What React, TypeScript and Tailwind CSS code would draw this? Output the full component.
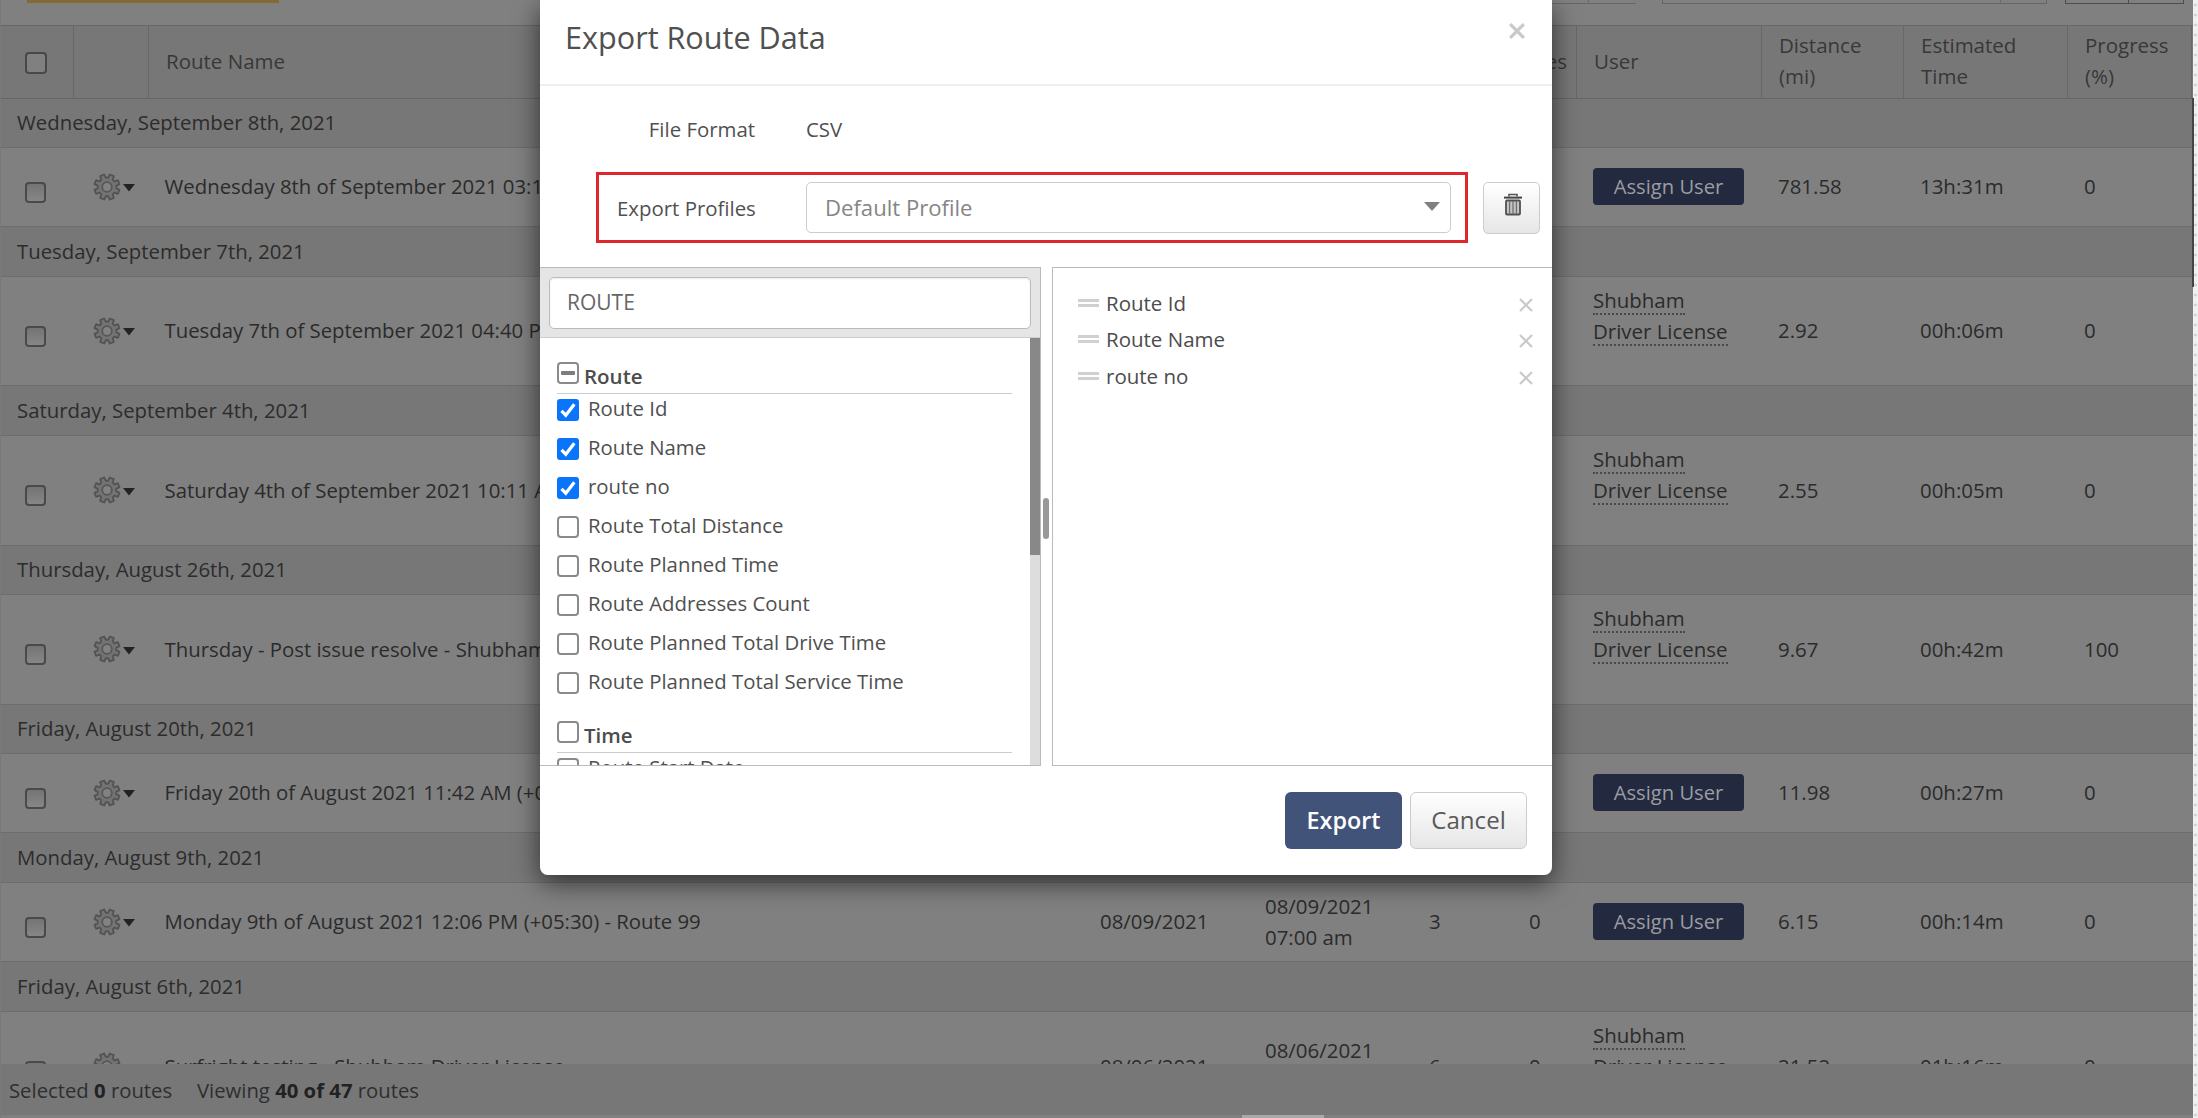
import type { ReactNode } from "react";

type RouteRow = {
  day: string;
  dayHeight: string;
  rowHeight: string;
  name: string;
  date?: string;
  time?: string;
  stops?: string;
  notes?: string;
  driver: boolean;
  distance: string;
  duration: string;
  progress: string;
};

const ROUTES: RouteRow[] = [
  { day: "Wednesday, September 8th, 2021", dayHeight: "h-[49px]", rowHeight: "h-[79px]", name: "Wednesday 8th of September 2021 03:15 PM (+05:30)", driver: false, distance: "781.58", duration: "13h:31m", progress: "0" },
  { day: "Tuesday, September 7th, 2021", dayHeight: "h-[50px]", rowHeight: "h-[109px]", name: "Tuesday 7th of September 2021 04:40 PM (+05:30)", driver: true, distance: "2.92", duration: "00h:06m", progress: "0" },
  { day: "Saturday, September 4th, 2021", dayHeight: "h-[50px]", rowHeight: "h-[110px]", name: "Saturday 4th of September 2021 10:11 AM (+05:30)", driver: true, distance: "2.55", duration: "00h:05m", progress: "0" },
  { day: "Thursday, August 26th, 2021", dayHeight: "h-[49px]", rowHeight: "h-[110px]", name: "Thursday - Post issue resolve - Shubham Driver", driver: true, distance: "9.67", duration: "00h:42m", progress: "100" },
  { day: "Friday, August 20th, 2021", dayHeight: "h-[49px]", rowHeight: "h-[79px]", name: "Friday 20th of August 2021 11:42 AM (+05:30)", driver: false, distance: "11.98", duration: "00h:27m", progress: "0" },
  { day: "Monday, August 9th, 2021", dayHeight: "h-[50px]", rowHeight: "h-[79px]", name: "Monday 9th of August 2021 12:06 PM (+05:30) - Route 99", date: "08/09/2021", time: "07:00 am", stops: "3", notes: "0", driver: false, distance: "6.15", duration: "00h:14m", progress: "0" },
  { day: "Friday, August 6th, 2021", dayHeight: "h-[50px]", rowHeight: "h-[110px]", name: "Surfright testing - Shubham Driver License", date: "08/06/2021", time: "07:00 am", stops: "6", notes: "0", driver: true, distance: "21.52", duration: "01h:16m", progress: "0" },
];

const FIELDS: [string, boolean][] = [
  ["Route Id", true],
  ["Route Name", true],
  ["route no", true],
  ["Route Total Distance", false],
  ["Route Planned Time", false],
  ["Route Addresses Count", false],
  ["Route Planned Total Drive Time", false],
  ["Route Planned Total Service Time", false],
];

const COLS =
  "grid grid-cols-[73px_75px_935px_165px_164px_100px_64px_185px_142px_164px_124px]";

const GEAR_POINTS = Array.from({ length: 8 }, (_, i) => {
  const c = (i * Math.PI) / 4 + Math.PI / 8;
  return [
    [c - 0.27, 9.3],
    [c - 0.17, 12.8],
    [c + 0.17, 12.8],
    [c + 0.27, 9.3],
  ]
    .map(([a, r]) => `${(14 + r * Math.cos(a)).toFixed(2)},${(14 + r * Math.sin(a)).toFixed(2)}`)
    .join(" ");
}).join(" ");

function Gear() {
  return (
    <svg viewBox="0 0 28 28" className="h-7 w-7 shrink-0">
      <polygon points={GEAR_POINTS} fill="#737373" stroke="#535353" strokeWidth="1.8" strokeLinejoin="round" />
      <circle cx="14" cy="14" r="4.8" fill="#828282" stroke="#575757" strokeWidth="1.8" />
    </svg>
  );
}

function Cross({ className, width }: { className: string; width: number }) {
  return (
    <svg viewBox="0 0 14 14" className={className} stroke="#c9c9c9" strokeWidth={width}>
      <path d="M1 1 L13 13 M13 1 L1 13" />
    </svg>
  );
}

function Check({ state }: { state?: "on" | "mixed" | "off" }) {
  if (state === "on") {
    return (
      <svg viewBox="0 0 22 22" className="h-[22px] w-[22px] shrink-0">
        <rect width="22" height="22" rx="3" fill="#0a75fb" />
        <path d="M4.5 11.8 L8.8 16.2 L17.3 5.2" fill="none" stroke="#fff" strokeWidth="3.2" />
      </svg>
    );
  }
  return (
    <span className="flex h-[22px] w-[22px] shrink-0 items-center justify-center rounded-[4px] border-2 border-[#8a8a8a] bg-white">
      {state === "mixed" && <span className="h-[4px] w-[14px] rounded-[1px] bg-[#7d7d7d]" />}
    </span>
  );
}

function HeadCell({ children, className = "" }: { children?: ReactNode; className?: string }) {
  return (
    <div className={`flex items-center border-r border-[#686868] pb-[2px] pl-[17px] ${className}`}>{children}</div>
  );
}

function GridRow({ route }: { route: RouteRow }) {
  return (
    <>
      <div className={`${route.dayHeight} flex items-center border-b border-[#6d6d6d] bg-[#777] pb-px pl-4 text-[20.35px] text-[#2c2c2c]`}>
        {route.day}
      </div>
      <div className={`${route.rowHeight} ${COLS} items-center border-b border-[#6d6d6d] bg-[#808080] pb-px text-[20.45px] text-[#2b2b2b]`}>
        <span className="mt-[11px] ml-6 h-[21px] w-[21px] rounded-[4px] border-2 border-[#4a4a4a] bg-linear-to-b from-[#747474] to-[#878787]" />
        <span className="flex items-center pl-[19px]">
          <Gear />
          <svg viewBox="0 0 12 8" className="mt-[3px] ml-[2px] h-2 w-3">
            <path d="M0 0 H12 L6 7.5 Z" fill="#222" />
          </svg>
        </span>
        <span className="pl-[15.5px] text-[20.35px]">{route.name}</span>
        <span className="pl-4">{route.date}</span>
        <span className="pl-4 leading-[31px]">
          {route.date}
          <br />
          {route.time}
        </span>
        <span className="pl-4">{route.stops}</span>
        <span className="pl-4">{route.notes}</span>
        <span className="pl-4">
          {route.driver ? (
            <span className="mb-[31px] flex flex-col items-start leading-[31px]">
              <span className="flex h-[31px] flex-col">
                <span className="h-[30px] border-b-2 border-dotted border-[#484848]">Shubham</span>
              </span>
              <span className="h-[30px] border-b-2 border-dotted border-[#484848]">Driver License</span>
            </span>
          ) : (
            <span className="flex h-[37px] w-[151px] items-center justify-center rounded-[4px] bg-[#232a3f] pb-px text-[20.2px] text-[#9b9da3]">
              Assign User
            </span>
          )}
        </span>
        <span className="pl-4">{route.distance}</span>
        <span className="pl-4">{route.duration}</span>
        <span className="pl-4">{route.progress}</span>
      </div>
    </>
  );
}

function RoutesPage() {
  return (
    <div className="flex h-[1118px] w-[2193px] flex-col overflow-hidden border-l border-[#747a80] bg-[#808080]">
      <div className="flex h-[25px] items-start">
        <div className="ml-[26px] h-[3px] w-[252px] bg-[#866a36]" />
        <div className="ml-[1258px] flex h-1 w-[99px] border-b border-[#666]">
          <div className="w-[52px] border-r border-[#6c6c6c]" />
        </div>
        <div className="ml-[26px] flex h-1 w-[385px] border-x border-b border-[#666]">
          <div className="w-[338px] border-r border-[#6c6c6c]" />
        </div>
        <div className="ml-[18px] flex h-1 w-[119px] border-x border-b border-[#4d4d4d]">
          <div className="w-[63px] border-r border-[#4d4d4d]" />
        </div>
      </div>
      <div className={`${COLS} h-[74px] shrink-0 border-y border-[#666] bg-[#777] text-[20.5px] leading-[31px] text-[#383838]`}>
        <HeadCell className="pl-[24px]">
          <span className="mt-1 h-[22px] w-[22px] rounded-[4px] border-2 border-[#484848] bg-[#808080]" />
        </HeadCell>
        <HeadCell />
        <HeadCell>Route Name</HeadCell>
        <HeadCell />
        <HeadCell />
        <HeadCell />
        <HeadCell className="justify-end pr-[9px]">Notes</HeadCell>
        <HeadCell>User</HeadCell>
        <HeadCell>
          Distance
          <br />
          (mi)
        </HeadCell>
        <HeadCell>
          Estimated
          <br />
          Time
        </HeadCell>
        <HeadCell>
          Progress
          <br />
          (%)
        </HeadCell>
      </div>
      <div className="h-[965px] shrink-0 overflow-hidden">
        {ROUTES.map((r) => (
          <GridRow key={r.day} route={r} />
        ))}
      </div>
      <div className="flex h-[51px] shrink-0 items-center bg-[#777] pt-[2px] pl-2 text-[20.3px] whitespace-pre text-[#2e2e2e]">
        <span className="w-[188px]">
          Selected <b className="text-[#222]">0</b> routes
        </span>
        <span>
          Viewing <b className="text-[#222]">40 of 47</b> routes
        </span>
      </div>
      <div className="ml-[1241px] h-[3px] w-[82px] bg-[#a9a9a9]" />
    </div>
  );
}

function FieldGroup({ label, state }: { label: string; state: "mixed" | "off" }) {
  return (
    <div className="flex h-8 gap-[5px] border-b border-[#ccc]">
      <Check state={state} />
      <span className="mt-[2px] text-[20.5px] leading-6 font-semibold text-[#4c4c4c]">{label}</span>
    </div>
  );
}

function Field({ label, on }: { label: string; on: boolean }) {
  return (
    <div className="flex h-[39px] items-start gap-[9px]">
      <Check state={on ? "on" : "off"} />
      <span className="-mt-[3px] text-[20.35px] leading-6 text-[#505050]">{label}</span>
    </div>
  );
}

function ExportDialog() {
  return (
    <div className="absolute top-0 left-[540px] flex h-[875px] w-[1012px] flex-col overflow-hidden rounded-b-[8px] bg-white">
      <div className="flex h-[86px] justify-between border-b-2 border-[#eee] pr-[27px] pl-[25px]">
        <h1 className="mt-4 text-[30.6px] leading-[42px] text-[#505050]">Export Route Data</h1>
        <Cross className="mt-[23px] h-4 w-4" width={2.8} />
      </div>
      <div className="flex h-[86px] items-center text-[20.4px] text-[#505050]">
        <span className="w-[215px] text-right">File Format</span>
        <span className="ml-[51px]">CSV</span>
      </div>
      <div className="flex h-[71px] items-center pl-14">
        <div className="flex h-[71px] w-[872px] items-center border-[3px] border-[#df262c] pl-[18px]">
          <span className="w-[138px] pt-px text-[20.4px] whitespace-nowrap text-[#505050]">Export Profiles</span>
          <div className="ml-[51px] flex h-[51px] w-[645px] items-center justify-between rounded-[5px] border-[1.5px] border-[#ccc] pr-[10px] pl-[18px]">
            <span className="pt-px text-[22.1px] text-[#858585]">Default Profile</span>
            <svg viewBox="0 0 16 9" className="mb-[3px] h-[9px] w-4">
              <path d="M0 0 H16 L8 9 Z" fill="#808080" />
            </svg>
          </div>
        </div>
        <div className="ml-[15px] flex h-[52px] w-[57px] justify-center rounded-[5px] border-[1.5px] border-[#ccc] bg-linear-to-b from-white to-[#e6e6e6] pt-[10px] pl-[2px]">
          <svg viewBox="0 0 18 23" className="h-[23px] w-[18px]">
            <path d="M5 3.5 V1.5 H13 V3.5" fill="none" stroke="#555" strokeWidth="1.6" />
            <path d="M0 4.6 H18" stroke="#444" strokeWidth="2" />
            <rect x="2" y="7.5" width="14" height="14" rx="1" fill="#c4c4c4" stroke="#505050" strokeWidth="1.8" />
            <path d="M5.6 8 V21 M9 8 V21 M12.4 8 V21" stroke="#707070" strokeWidth="1.3" />
          </svg>
        </div>
      </div>
      <div className="mt-6 flex h-[499px] shrink-0">
        <div className="flex w-[501px] flex-col border-y border-r border-[#bbb]">
          <div className="flex h-[70px] shrink-0 items-center border-b border-[#ccc] bg-[#e5e5e5] pl-[9px]">
            <div className="flex h-[52px] w-[482px] items-center rounded-[5px] border-[1.5px] border-[#bbb] bg-white pl-[17px] text-[21px] text-[#666] shadow-[inset_0_1px_2px_rgba(0,0,0,0.08)]">
              ROUTE
            </div>
          </div>
          <div className="flex min-h-0 flex-1 justify-between">
            <div className="ml-[17px] w-[455px] overflow-hidden pt-6">
              <FieldGroup label="Route" state="mixed" />
              <div className="mt-[5px] mb-[10px]">
                {FIELDS.map(([label, on]) => (
                  <Field key={label} label={label} on={on} />
                ))}
              </div>
              <FieldGroup label="Time" state="off" />
              <div className="mt-[5px]">
                <Field label="Route Start Date" on={false} />
              </div>
            </div>
            <div className="w-[10px] bg-[#ddd]">
              <div className="h-[217px] bg-[#888]" />
            </div>
          </div>
        </div>
        <div className="flex w-[11px] items-center justify-start pl-[2px]">
          <div className="mt-[3px] h-[41px] w-[6px] rounded-[3px] bg-[#999]" />
        </div>
        <div className="flex-1 border-y border-l border-[#bbb] pt-[17px] pr-[19px] pl-[25px]">
          {["Route Id", "Route Name", "route no"].map((label) => (
            <div key={label} className="flex h-[36.5px] items-center">
              <span className="flex h-[9px] w-[21px] flex-col justify-between pb-px">
                <span className="h-[3px] bg-[#d0d0d0]" />
                <span className="h-[3px] bg-[#d0d0d0]" />
              </span>
              <span className="ml-[7px] flex-1 text-[20.5px] text-[#4c4c4c]">{label}</span>
              <Cross className="mt-[3px] h-[14px] w-[14px]" width={2.2} />
            </div>
          ))}
        </div>
      </div>
      <div className="flex flex-1 items-start justify-end gap-2 pt-[26px] pr-[25px]">
        <div className="flex h-[57px] w-[117px] items-center justify-center rounded-[6px] bg-[#42537a] text-[23.3px] font-semibold text-white">
          Export
        </div>
        <div className="flex h-[57px] w-[117px] items-center justify-center rounded-[6px] border-[1.5px] border-[#ccc] bg-linear-to-b from-white to-[#e6e6e6] text-[24.1px] text-[#5a5a5a]">
          Cancel
        </div>
      </div>
    </div>
  );
}

export default function App() {
  return (
    <div className="relative flex h-[1118px] w-[2198px] overflow-hidden bg-[#f1f1f1] font-['Open_Sans',sans-serif] whitespace-nowrap">
      <RoutesPage />
      <div className="w-[5px] bg-[radial-gradient(circle,#d4d4d4_1.2px,transparent_1.8px)] bg-[length:5px_10px]" />
      <div className="absolute top-[98px] left-[2192px] h-[189px] w-[2px] bg-[#444]" />
      <div className="absolute top-0 left-[540px] h-[875px] w-[1012px] rounded-b-[8px] shadow-[0_8px_26px_rgba(0,0,0,0.6)]" />
      <ExportDialog />
    </div>
  );
}
